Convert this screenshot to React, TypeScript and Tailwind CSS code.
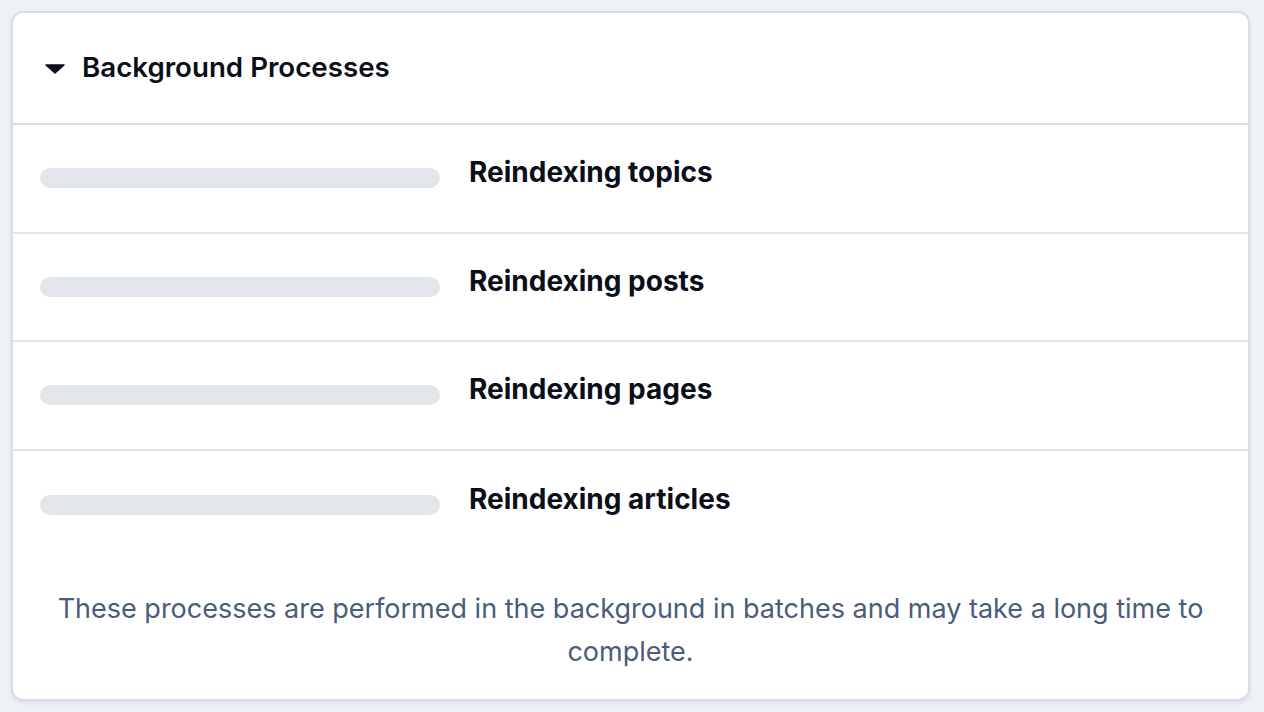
import React from "react";

const processes = ["Reindexing topics", "Reindexing posts", "Reindexing pages", "Reindexing articles"];

export default function App() {
  return (
    <div
      className="min-h-[712px] w-full bg-[#eef1f6] pt-[11px] pl-[11px]"
      style={{ fontFamily: "Inter, 'Noto Sans', sans-serif" }}
    >
      <div className="w-[1239px] overflow-hidden rounded-[12px] border-2 border-[#d7dde7] bg-white shadow-[0_2px_4px_rgba(15,23,42,0.08)]">
        {/* Header */}
        <div className="flex h-[112px] items-center gap-[17px] border-b-2 border-[#d7dde7] pl-[32px]">
          <svg width="20" height="10" viewBox="0 0 20 10" className="mt-[1px]">
            <path d="M1 1 H19 L10 9 Z" fill="#0b0f19" stroke="#0b0f19" strokeWidth="1.5" strokeLinejoin="round" />
          </svg>
          <h2 className="text-[27.7px] font-semibold text-[#0b0f19]">Background Processes</h2>
        </div>

        {processes.map((name, i) => (
          <div
            key={name}
            className={`flex h-[108.5px] items-center gap-[29px] pl-[27px] ${
              i < processes.length - 1 ? "border-b-2 border-[#dfe3ea]" : ""
            }`}
          >
            <div className="h-[20px] w-[400px] rounded-full bg-[#e2e5ea]" />
            <span className="mb-[12px] text-[28px] font-bold text-[#0b0f19]">{name}</span>
          </div>
        ))}

        {/* Footer note */}
        <p className="px-[30px] pt-[28px] pb-[26px] text-center text-[27px] leading-[43px] text-[#4b5b7c]">
          These processes are performed in the background in batches and may take a long time to complete.
        </p>
      </div>
    </div>
  );
}
